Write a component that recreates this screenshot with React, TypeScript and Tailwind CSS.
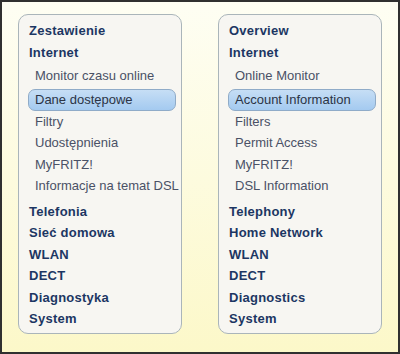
import React from 'react';

type Menu = {
  top: string[];
  subs: string[];
  active: number;
  rest: string[];
};

const menus: Menu[] = [
  {
    top: ['Zestawienie', 'Internet'],
    subs: ['Monitor czasu online', 'Dane dostępowe', 'Filtry', 'Udostępnienia', 'MyFRITZ!', 'Informacje na temat DSL'],
    active: 1,
    rest: ['Telefonia', 'Sieć domowa', 'WLAN', 'DECT', 'Diagnostyka', 'System'],
  },
  {
    top: ['Overview', 'Internet'],
    subs: ['Online Monitor', 'Account Information', 'Filters', 'Permit Access', 'MyFRITZ!', 'DSL Information'],
    active: 1,
    rest: ['Telephony', 'Home Network', 'WLAN', 'DECT', 'Diagnostics', 'System'],
  },
];

const Heading = ({ label }: { label: string }) => (
  <div className="h-[21.5px] leading-[21.5px] pl-[1px] text-[13px] font-bold tracking-[0.25px] text-[#1c3663]">
    {label}
  </div>
);

const MenuPanel = ({ menu }: { menu: Menu }) => (
  <div className="w-[164px] h-[320px] rounded-[10px] border border-[#aab5ba] bg-[#f7f6f2] pt-[5px] pl-[9px] pr-[5px]">
    {menu.top.map((t) => (
      <Heading key={t} label={t} />
    ))}
    <div className="mt-[2px] flex flex-col">
      {menu.subs.map((s, i) =>
        i === menu.active ? (
          <div
            key={s}
            className="mt-[2px] h-[22px] leading-[20px] rounded-[7px] border border-[#8fabc8] bg-gradient-to-b from-[#c6def5] to-[#a4caf0] pl-[6px] text-[13px] text-[#2b3446] whitespace-nowrap"
          >
            {s}
          </div>
        ) : (
          <div
            key={s}
            className="h-[21.5px] leading-[21.5px] pl-[7px] text-[13px] text-[#4a5166] whitespace-nowrap"
          >
            {s}
          </div>
        )
      )}
    </div>
    <div className="mt-[4px]">
      {menu.rest.map((t) => (
        <Heading key={t} label={t} />
      ))}
    </div>
  </div>
);

export default function App() {
  return (
    <div
      className="w-[400px] h-[354px] border-2 border-[#303030] bg-gradient-to-b from-[#fefef3] to-[#fcf8c9] pt-[12px] pl-[16px] flex gap-[36px]"
      style={{ fontFamily: '"Liberation Sans", Arial, sans-serif' }}
    >
      {menus.map((m, i) => (
        <MenuPanel key={i} menu={m} />
      ))}
    </div>
  );
}
